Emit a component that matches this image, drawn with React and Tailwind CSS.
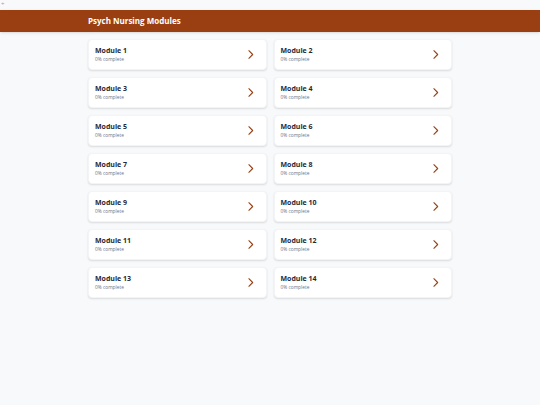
import React from 'react';

const modules = Array.from({ length: 14 }, (_, i) => ({ id: i + 1, title: `Module ${i + 1}`, progress: 0 }));

const Chevron = () => (
  <svg viewBox="0 0 24 24" fill="none" stroke="currentColor" strokeWidth="2" strokeLinecap="round" strokeLinejoin="round" className="w-[13px] h-[13px] text-[#9a3f12]">
    <polyline points="9 5 16 12 9 19" />
  </svg>
);

export default function App() {
  return (
    <div className="min-h-screen bg-[#f7f9fb]" style={{ fontFamily: '"Open Sans", "Noto Sans", sans-serif' }}>
      <div className="h-[10px] px-[1px] text-[6px] leading-[8px] text-gray-400">+</div>
      <header className="bg-[#9a3f12] h-[22px] shadow-sm">
        <div className="w-[364px] mx-auto h-full flex items-center">
          <h1 className="text-white text-[8px] font-bold">Psych Nursing Modules</h1>
        </div>
      </header>
      <main className="w-[364px] mx-auto pt-[7px] grid grid-cols-2 gap-x-[7px] gap-y-[7px]">
        {modules.map((m) => (
          <div key={m.id} className="h-[31px] bg-white rounded-[4px] border border-gray-100 shadow-[0_1px_2px_rgba(0,0,0,0.12)] flex items-center justify-between pl-[6px] pr-[9px]">
            <div className="flex flex-col">
              <span className="text-[7px] font-bold text-gray-800 leading-[10px]">{m.title}</span>
              <span className="text-[4.8px] text-gray-500 leading-[7px]">{m.progress}% complete</span>
            </div>
            <Chevron />
          </div>
        ))}
      </main>
    </div>
  );
}
